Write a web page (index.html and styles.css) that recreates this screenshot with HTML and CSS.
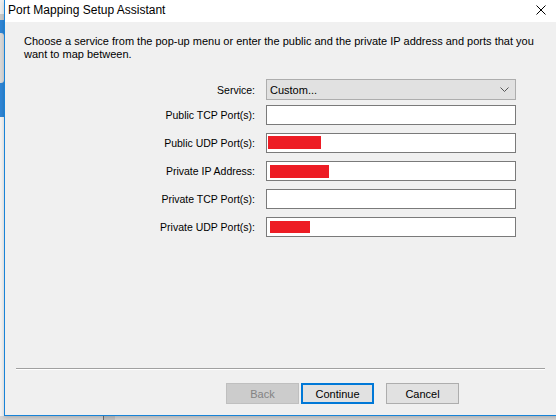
FILE: index.html
```html
<!DOCTYPE html>
<html>
<head>
<meta charset="utf-8">
<link rel="stylesheet" href="styles.css">
</head>
<body>
<div class="desktop">
  <div class="bg-strip">
    <div class="strip-top"></div>
    <div class="strip-grey"></div>
    <div class="strip-blue"><div class="strip-blob"></div></div>
    <div class="strip-light"></div>
  </div>
  <div class="bg-bottom"><div class="bg-box"></div></div>
  <div class="window">
    <div class="titlebar">
      <span class="title">Port Mapping Setup Assistant</span>
      <div class="close">
        <svg width="10" height="10" viewBox="0 0 10 10"><path d="M0.5 0.5 L9.5 9.5 M9.5 0.5 L0.5 9.5" stroke="#000" stroke-width="1" fill="none"/></svg>
      </div>
    </div>
    <div class="content">
      <p class="desc">Choose a service from the pop-up menu or enter the public and the private IP address and ports that you want to map between.</p>
      <div class="form">
        <div class="row row-service">
          <span class="label">Service:</span>
          <div class="select"><span class="select-text">Custom...</span>
            <svg class="chev" width="9" height="5" viewBox="0 0 9 5"><path d="M0.5 0.5 L4.5 4.5 L8.5 0.5" stroke="#555" stroke-width="1" fill="none"/></svg>
          </div>
        </div>
        <div class="row">
          <span class="label">Public TCP Port(s):</span>
          <div class="field"></div>
        </div>
        <div class="row">
          <span class="label">Public UDP Port(s):</span>
          <div class="field"><span class="redact r1"></span></div>
        </div>
        <div class="row">
          <span class="label">Private IP Address:</span>
          <div class="field"><span class="redact r2"></span></div>
        </div>
        <div class="row">
          <span class="label">Private TCP Port(s):</span>
          <div class="field"></div>
        </div>
        <div class="row">
          <span class="label">Private UDP Port(s):</span>
          <div class="field"><span class="redact r3"></span></div>
        </div>
      </div>
      <div class="sep"></div>
      <div class="buttons">
        <div class="btn btn-disabled">Back</div>
        <div class="btn btn-default">Continue</div>
        <div class="btn btn-cancel">Cancel</div>
      </div>
    </div>
  </div>
</div>
</body>
</html>
```

FILE: styles.css
```css
html, body {
  margin: 0;
  padding: 0;
}
body {
  width: 556px;
  height: 420px;
  overflow: hidden;
  font-family: "Liberation Sans", Arial, sans-serif;
  color: #000;
}
.desktop {
  position: relative;
  width: 556px;
  height: 420px;
  overflow: hidden;
  background: #d4d4d4;
}
.bg-strip {
  position: absolute;
  left: 0;
  top: 0;
  width: 4px;
  height: 416px;
  display: flex;
  flex-direction: column;
}
.strip-top { height: 14px; background: #eeeeee; }
.strip-grey { height: 6px; background: #c9c9c9; }
.strip-blue {
  height: 97px;
  background: #2f86d6;
  padding-top: 13px;
  box-sizing: border-box;
}
.strip-blob {
  height: 50px;
  background: #d9d9d9;
  border-radius: 0 3px 3px 0;
}
.strip-light { flex: 1; background: #f3f3f3; }
.bg-bottom {
  position: absolute;
  left: 0;
  top: 416px;
  width: 556px;
  height: 4px;
  background: #d6d6d6;
}
.bg-box {
  margin-left: 103px;
  width: 11px;
  height: 4px;
  border-left: 1px solid #6f6f6f;
  background: #c4c4c4;
}
.window {
  position: absolute;
  left: 4px;
  top: 0;
  width: 560px;
  height: 416px;
  box-sizing: border-box;
  border-left: 1px solid #1883d7;
  border-bottom: 1px solid #1883d7;
  display: flex;
  flex-direction: column;
  box-shadow: 0 2px 4px rgba(0,0,0,0.18);
}
.titlebar {
  height: 22px;
  flex: none;
  background: #ffffff;
  display: flex;
  align-items: center;
  padding-left: 3px;
}
.title {
  font-size: 12px;
  padding-bottom: 2px;
}
.close {
  margin-left: auto;
  width: 46px;
  height: 22px;
  display: flex;
  align-items: center;
  justify-content: center;
  padding-bottom: 2px;
  box-sizing: border-box;
}
.close svg { display: block; }
.content {
  flex: 1;
  background: #f0f0f0;
  display: flex;
  flex-direction: column;
}
.desc {
  margin: 0;
  padding: 13px 20px 0 19px;
  font-size: 11px;
  line-height: 13px;
}
.form {
  margin-top: 18px;
  display: flex;
  flex-direction: column;
  gap: 8px;
}
.row {
  display: flex;
  align-items: center;
  height: 20px;
}
.row-service {
  height: 21px;
  margin-bottom: -3px;
}
.label {
  width: 250px;
  text-align: right;
  font-size: 10.5px;
  margin-right: 11px;
  flex: none;
}
.select {
  width: 250px;
  height: 21px;
  box-sizing: border-box;
  border: 1px solid #adadad;
  background: #e1e1e1;
  display: flex;
  align-items: center;
  padding: 0 6px 0 3px;
}
.select-text {
  font-size: 11px;
}
.chev {
  margin-left: auto;
  display: block;
}
.field {
  width: 250px;
  height: 20px;
  box-sizing: border-box;
  border: 1px solid #7a7a7a;
  background: #ffffff;
  display: flex;
  align-items: flex-start;
}
.redact {
  display: block;
  background: #ed1c24;
}
.r1 { margin: 2px 0 0 1px; width: 53px; height: 13px; }
.r2 { margin: 3px 0 0 3px; width: 59px; height: 13px; }
.r3 { margin: 3px 0 0 3px; width: 40px; height: 12px; }
.sep {
  margin-top: auto;
  margin-left: 11px;
  width: 529px;
  height: 1px;
  background: #a0a0a0;
  border-bottom: 1px solid #ffffff;
}
.buttons {
  display: flex;
  padding-left: 221px;
  margin-top: 13px;
  margin-bottom: 11px;
}
.btn {
  width: 73px;
  height: 21px;
  box-sizing: border-box;
  display: flex;
  align-items: center;
  justify-content: center;
  font-size: 11px;
  background: #e1e1e1;
  border: 1px solid #adadad;
}
.btn-disabled {
  background: #cccccc;
  border-color: #bfbfbf;
  color: #838383;
}
.btn-default {
  margin-left: 2px;
  border: 2px solid #0078d7;
}
.btn-cancel {
  margin-left: 12px;
}
```
